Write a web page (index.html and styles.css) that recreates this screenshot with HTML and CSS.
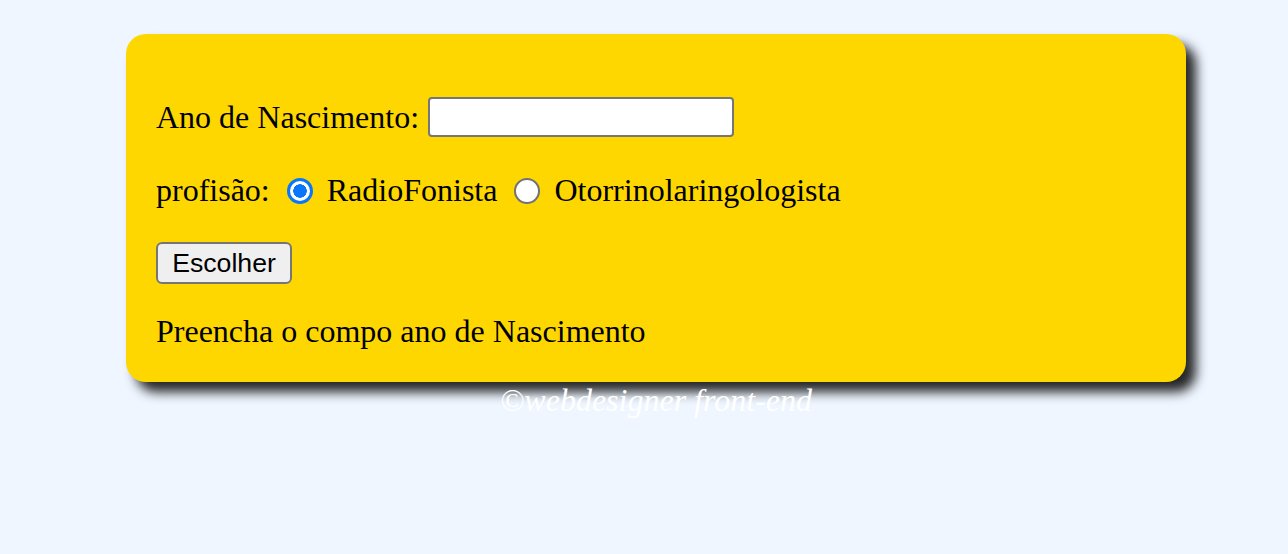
FILE: index.html
```html
<!DOCTYPE html>
<html lang="pt">
<head>
<meta charset="utf-8">
<title>Profissão</title>
<link rel="stylesheet" href="styles.css">
</head>
<body>
<div class="wrap">
  <div class="card">
    <div class="row row-ano">
      <label class="lbl" for="ano">Ano de Nascimento:</label>
      <input class="txt" type="text" id="ano">
    </div>
    <div class="row row-prof">
      <span class="lbl">profisão:</span>
      <input class="radio" type="radio" name="prof" id="r1" checked>
      <label class="lbl" for="r1">RadioFonista</label>
      <input class="radio" type="radio" name="prof" id="r2">
      <label class="lbl" for="r2">Otorrinolaringologista</label>
    </div>
    <div class="row row-btn">
      <button class="btn" type="button">Escolher</button>
    </div>
    <p class="res">Preencha o compo ano de Nascimento</p>
  </div>
  <p class="foot">©webdesigner front-end</p>
</div>
</body>
</html>
```
FILE: styles.css
```css
html, body {
  margin: 0;
  padding: 0;
}
body {
  background: #eff6ff;
  height: 554px;
  font-family: "Liberation Serif", "Times New Roman", serif;
  font-size: 32px;
  line-height: 37px;
  color: #000;
}
.wrap {
  width: 1060px;
  margin: 34px 0 0 126px;
}
.card {
  background: #ffd700;
  border-radius: 20px;
  box-shadow: 10px 10px 12px rgba(0, 0, 0, 0.85);
  padding: 63px 30px 32px;
}
.row {
  display: flex;
  align-items: center;
}
.row-ano {
  height: 40px;
}
.txt {
  box-sizing: border-box;
  width: 306px;
  height: 40px;
  margin: 0 0 0 9px;
  border: 2px solid #767676;
  border-radius: 4px;
  background: #fff;
  padding: 2px 4px;
  font: 26px "Liberation Sans", Arial, sans-serif;
}
.row-prof {
  margin-top: 35px;
  height: 37px;
}
.radio {
  appearance: none;
  -webkit-appearance: none;
  box-sizing: border-box;
  width: 26px;
  height: 26px;
  margin: 0 14px 0 17px;
  border: 2px solid #727272;
  border-radius: 50%;
  background: #fff;
  flex: none;
}
.radio:checked {
  border: 3px solid #0a76fa;
  background: radial-gradient(circle, #0a76fa 0 6.5px, #fff 7px);
}
.row-btn {
  margin-top: 33px;
}
.btn {
  box-sizing: border-box;
  height: 42px;
  width: 136px;
  padding: 0;
  border: 2px solid #767676;
  border-radius: 6px;
  background: #efefef;
  color: #000;
  font: 26.67px/1 "Liberation Sans", Arial, sans-serif;
}
.res {
  margin: 29px 0 0;
}
.foot {
  margin: 0;
  text-align: center;
  font-style: italic;
  color: #fff;
}
```
